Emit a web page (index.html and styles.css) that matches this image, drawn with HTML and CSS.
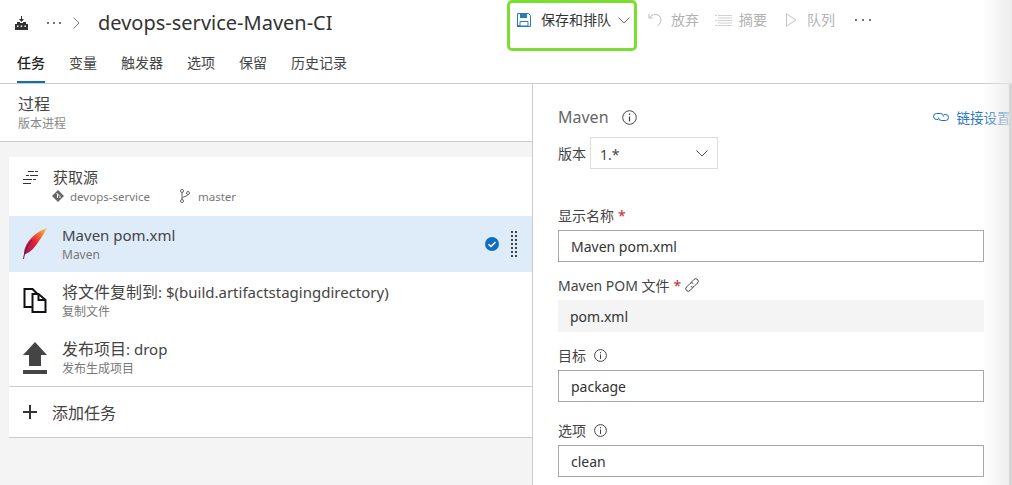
FILE: index.html
```html
<!DOCTYPE html>
<html lang="zh-CN">
<head>
    <meta charset="UTF-8">
    <title>devops-service-Maven-CI</title>
    <link rel="stylesheet" href="styles.css">
</head>
<body>
    <div class="top-row">
        <div class="crumbs">
            <svg class="logo" width="13" height="14" viewBox="0 0 13 14"><path d="M6 0h1v3h2L6.500 6 4 3h2zM2 6h3v1h3V6h3v2h2v6H0V8h2z" fill="#333"/><path d="M2 9.500h1.500V11H2zM5.700 9.500h1.500V11H5.700zM9.500 9.500H11V11H9.500z" fill="#fff"/></svg>
            <span class="dots"><i></i><i></i><i></i></span>
            <svg class="crumb-arrow" width="7" height="12" viewBox="0 0 7 12"><path d="M.5.500 6 6 .5 11.500" fill="none" stroke="#777"/></svg>
            <span class="title">devops-service-Maven-CI</span>
        </div>
        <div class="toolbar">
            <button class="save-btn">
                <svg width="14" height="14" viewBox="0 0 14 14"><path d="M.5.500h11l2 2v11H.5z" fill="#fff" stroke="#2b79c2"/><path d="M3 1h7v4H3z" fill="#2b79c2"/><path d="M3 8.500h8V13H3z" fill="none" stroke="#2b79c2"/><path d="M0 12h3v2H0z" fill="#2b79c2"/></svg>
                <span class="save-text">保存和排队</span>
                <svg class="save-arrow" width="12" height="7" viewBox="0 0 12 7"><path d="M.5.500 6 6 11.500.500" fill="none" stroke="#666"/></svg>
            </button>
            <span class="tool tool-undo">
                <svg width="14" height="14" viewBox="0 0 14 14"><path d="M1 1v4h4M1.300 4.800C3 2.500 5 1.500 7.500 1.500c3 0 5.500 2.200 5.500 5.200 0 2.400-1.500 4.300-3.500 6.300" fill="none" stroke="#bbb"/></svg>
                放弃
            </span>
            <span class="tool tool-summary">
                <svg width="17" height="11" viewBox="0 0 17 11"><path d="M3 .5h14M3 5.500h14M3 10.500h14M0 .5h2M0 5.500h2M0 10.500h2M3 3h14M3 8h14" stroke="#c4c4c4" fill="none" stroke-width=".8"/></svg>
                摘要
            </span>
            <span class="tool tool-queue">
                <svg width="11" height="14" viewBox="0 0 11 14"><path d="M.5.800 10 7 .5 13.200z" fill="none" stroke="#c4c4c4"/></svg>
                队列
            </span>
            <span class="dots tool-more"><i></i><i></i><i></i></span>
        </div>
    </div>

    <div class="tabs">
        <a class="tab active">任务</a>
        <a class="tab">变量</a>
        <a class="tab">触发器</a>
        <a class="tab">选项</a>
        <a class="tab">保留</a>
        <a class="tab">历史记录</a>
    </div>

    <div class="main">
        <div class="left">
            <div class="process">
                <div class="process-title">过程</div>
                <div class="process-sub">版本进程</div>
            </div>
            <div class="task-list">
                <div class="source-row">
                    <svg class="source-icon" width="15" height="13" viewBox="0 0 15 13"><path d="M5 .5h6M12 .5h3M3 4.500h3M7 4.500h8M0 8.500h9M10 8.500h3M0 12.500h8" stroke="#333" fill="none"/></svg>
                    <div>
                        <div class="source-name">获取源</div>
                        <div class="source-meta">
                            <svg width="12" height="12" viewBox="0 0 12 12"><path d="M6 0 12 6 6 12 0 6z" fill="#666"/><path d="M4.500 3 8 6.500V8M5.500 4v4" stroke="#fff" fill="none"/></svg>
                            <span class="repo">devops-service</span>
                            <svg class="branch" width="10" height="14" viewBox="0 0 10 14"><circle cx="2" cy="2" r="1.500" fill="none" stroke="#666"/><circle cx="2" cy="12" r="1.500" fill="none" stroke="#666"/><circle cx="8" cy="4" r="1.500" fill="none" stroke="#666"/><path d="M2 3.500v7M8 5.500c0 2-6 2-6 4" fill="none" stroke="#666"/></svg>
                            <span>master</span>
                        </div>
                    </div>
                </div>
                <div class="task selected">
                    <svg class="task-icon" width="26" height="32" viewBox="0 0 26 32">
                        <defs><linearGradient id="feather" x1="0" y1="1" x2="1" y2="0"><stop offset="0" stop-color="#8c1c5c"/><stop offset=".45" stop-color="#e2213a"/><stop offset=".8" stop-color="#f58a32"/><stop offset="1" stop-color="#f7d860"/></linearGradient></defs>
                        <path d="M25 0C17 3 7 9 3 20c-.8 2.400-1 4.500-.8 6.500 3.500-1 7-3.500 10-7C17 14 21 7 25 0z" fill="url(#feather)"/>
                        <path d="M1.500 31C2.500 24 5 18 10 12" fill="none" stroke="#6b1440" stroke-width="1"/>
                    </svg>
                    <div class="task-text">
                        <div class="task-name"><span class="latin">Maven pom.xml</span></div>
                        <div class="task-sub">Maven</div>
                    </div>
                    <svg class="check" width="14" height="14" viewBox="0 0 14 14"><circle cx="7" cy="7" r="7" fill="#106ebe"/><path d="M3.500 7.200 6 9.500 10.500 5" fill="none" stroke="#fff" stroke-width="1.500"/></svg>
                    <span class="grip"></span>
                </div>
                <div class="task">
                    <svg class="task-icon" width="23" height="25" viewBox="0 0 23 25"><path d="M1 1h8l4 4v14H1z" fill="#fff" stroke="#111" stroke-width="2"/><path d="M9 6h6l7 6v12H9z" fill="#fff" stroke="#111" stroke-width="2"/><path d="M15 6v6h7" fill="none" stroke="#111" stroke-width="2"/></svg>
                    <div class="task-text">
                        <div class="task-name">将文件复制到<span class="latin">: $(build.artifactstagingdirectory)</span></div>
                        <div class="task-sub">复制文件</div>
                    </div>
                </div>
                <div class="task task-last">
                    <svg class="task-icon" width="24" height="32" viewBox="0 0 24 32"><path d="M12 0 24 13H18V24H6V13H0z" fill="#444"/><path d="M0 28h24v4H0z" fill="#444"/></svg>
                    <div class="task-text">
                        <div class="task-name">发布项目<span class="latin">: drop</span></div>
                        <div class="task-sub">发布生成项目</div>
                    </div>
                </div>
                <div class="add-task">
                    <svg width="14" height="14" viewBox="0 0 14 14"><path d="M7 0v14M0 7h14" stroke="#333" stroke-width="2"/></svg>
                    <span>添加任务</span>
                </div>
            </div>
        </div>

        <div class="right">
            <div class="panel-head">
                <span class="panel-title">Maven</span>
                <svg class="info-big" width="15" height="15" viewBox="0 0 15 15"><circle cx="7.500" cy="7.500" r="6.800" fill="none" stroke="#444"/><path d="M7.500 6.500v5M7.500 3.500v1.500" stroke="#444" stroke-width="1.200"/></svg>
                <a class="link-settings">
                    <svg width="16" height="10" viewBox="0 0 16 10"><path d="M5 7.500H3.500a3 3 0 0 1 0-6h4a3 3 0 0 1 3 3" fill="none" stroke="#106ebe"/><path d="M11 2.500h1.500a3 3 0 0 1 0 6h-4a3 3 0 0 1-3-3" fill="none" stroke="#106ebe"/></svg>
                    <span>链接设置</span>
                </a>
            </div>
            <div class="version-row">
                <span>版本</span>
                <div class="version-select">
                    <span class="version-value">1.*</span>
                    <svg width="12" height="7" viewBox="0 0 12 7"><path d="M.5.500 6 6 11.500.500" fill="none" stroke="#555"/></svg>
                </div>
            </div>

            <div class="field field-name">
                <div class="label">显示名称 <span class="req">*</span></div>
                <div class="input">Maven pom.xml</div>
            </div>
            <div class="field">
                <div class="label">Maven POM 文件 <span class="req">*</span>
                    <svg width="14" height="14" viewBox="0 0 14 14"><path d="M6 4.500 9 1.500a2.300 2.300 0 0 1 3.500 3.500L9 8.500a2.300 2.300 0 0 1-3.200 0M8 9.500 5 12.500A2.300 2.300 0 0 1 1.500 9L5 5.500a2.300 2.300 0 0 1 3.200 0" fill="none" stroke="#444"/></svg>
                </div>
                <div class="input readonly">pom.xml</div>
            </div>
            <div class="field">
                <div class="label">目标
                    <svg class="info" width="13" height="13" viewBox="0 0 13 13"><circle cx="6.500" cy="6.500" r="5.900" fill="none" stroke="#444"/><path d="M6.500 5.500v4.500M6.500 3v1.300" stroke="#444"/></svg>
                </div>
                <div class="input">package</div>
            </div>
            <div class="field field-last">
                <div class="label">选项
                    <svg class="info" width="13" height="13" viewBox="0 0 13 13"><circle cx="6.500" cy="6.500" r="5.900" fill="none" stroke="#444"/><path d="M6.500 5.500v4.500M6.500 3v1.300" stroke="#444"/></svg>
                </div>
                <div class="input">clean</div>
            </div>
        </div>
    </div>

    <div class="edge-shadow"></div>
</body>
</html>
```

FILE: styles.css
```css
html, body { height: 100%; }
body { margin: 0; overflow: hidden; background: #fff; color: #333; font-family: "Noto Sans", "Noto Sans CJK SC", sans-serif; font-size: 14px; }
svg { display: block; flex: none; }

.top-row { display: flex; height: 51px; }
.crumbs { display: flex; align-items: center; width: 507px; height: 46px; padding-left: 15px; box-sizing: border-box; }
.dots { display: flex; gap: 4px; margin-left: 19px; }
.dots i { width: 2px; height: 2px; background: #444; border-radius: 1px; }
.crumb-arrow { margin-left: 12px; }
.title { margin-left: 18px; font-size: 20px; line-height: 28px; color: #333; white-space: nowrap; }

.toolbar { display: flex; align-items: flex-start; color: #b2b2b2; line-height: 20px; }
.save-btn { display: flex; width: 130px; height: 51px; box-sizing: border-box; padding: 10px 0 0 7px; align-items: flex-start; background: #fff; border: 3px solid #7ae02f; border-radius: 5px; font: inherit; color: #333; }
.save-text { margin-left: 10px; margin-top: -3px; }
.save-arrow { margin-left: 7px; margin-top: 4px; }
.tool { display: flex; align-items: center; gap: 9px; margin-top: 10px; white-space: nowrap; }
.tool-undo { margin-left: 11px; }
.tool-summary { margin-left: 16px; gap: 7px; }
.tool-queue { margin-left: 19px; gap: 10px; }
.tool-more { margin-left: 20px; margin-top: 19px; gap: 5px; }

.tabs { display: flex; gap: 24px; height: 32px; padding-left: 17px; border-bottom: 1px solid #ccc; }
.tab { height: 30px; line-height: 24px; color: #444; }
.tab.active { font-weight: 500; color: #222; border-bottom: 2px solid #106ebe; }

.main { display: flex; height: 401px; }
.left { width: 532px; flex: none; background: #f4f4f4; border-right: 1px solid #ccc; }
.process { height: 58px; padding-left: 18px; box-sizing: border-box; background: #fff; border-bottom: 1px solid #ccc; padding-top: 9px; }
.process-title { font-size: 16px; line-height: 22px; color: #444; }
.process-sub { font-size: 12px; line-height: 18px; color: #888; }

.task-list { margin: 15px 0 0 9px; background: #fff; }
.source-row { display: flex; height: 59px; box-sizing: border-box; padding: 9px 0 0 14px; }
.source-icon { margin: 5px 15px 0 0; }
.source-name { font-size: 15px; line-height: 22px; color: #444; }
.source-meta { display: flex; align-items: center; height: 20px; margin-top: -2px; font-size: 11.5px; color: #777; margin-left: -1px; }
.repo { margin-left: 6px; width: 110px; }
.branch { margin-right: 8px; }

.task { display: flex; align-items: center; height: 57px; padding-left: 13px; box-sizing: border-box; }
.task.selected { height: 56px; background: #deecf9; }
.task-last { height: 58px; border-bottom: 1px solid #ccc; }
.task-icon { width: 26px; margin-right: 14px; }
.task-name { font-size: 16px; line-height: 21px; color: #444; white-space: nowrap; }
.latin { font-size: 15px; }
.task-sub { margin-top: 1px; font-size: 12px; line-height: 16px; color: #777; }
.task-text { flex: 1; }
.check { margin-right: 11px; }
.grip { width: 8px; height: 28px; margin-right: 14px; background: radial-gradient(circle, #444 1.1px, transparent 1.5px) 0 0 / 4px 4px; }

.add-task { display: flex; align-items: center; height: 51px; box-sizing: border-box; padding-left: 14px; gap: 15px; font-size: 16px; color: #444; border-bottom: 1px solid #ccc; }

.right { flex: 1; padding-left: 25px; min-width: 0; }
.panel-head { display: flex; align-items: center; height: 24px; margin-top: 21px; white-space: nowrap; }
.panel-title { font-size: 16px; color: #666; }
.info-big { margin-left: 13px; }
.link-settings { display: flex; align-items: center; gap: 8px; margin-left: 296px; font-size: 13.500px; color: #2b79c2; }

.version-row { display: flex; align-items: center; height: 32px; margin-top: 8px; color: #444; }
.version-select { display: flex; align-items: center; justify-content: space-between; width: 128px; height: 32px; margin-left: 4px; padding: 0 9px; box-sizing: border-box; border: 1px solid #ddd; }
.version-value { padding-top: 2px; }

.field { width: 426px; margin-top: 11px; }
.field-name { margin-top: 34px; }
.field-last { margin-top: 16px; }
.label { display: flex; align-items: center; gap: 4px; height: 24px; margin-bottom: 3px; color: #444; white-space: nowrap; }
.req { color: #c4262e; }
.info { margin-left: 4px; }
.input { height: 32px; padding-top: 2px; line-height: 28px; padding-left: 12px; box-sizing: border-box; border: 1px solid #a6a6a6; color: #333; }
.input.readonly { border: 0; padding-top: 2px; line-height: 30px; background: #f4f4f4; }

/* scroll shadow over the right edge of the page */
.edge-shadow { position: absolute; top: 0; right: 0; bottom: 0; width: 50px; background: linear-gradient(to right, rgba(236,236,236,0) 40%, rgba(232,232,232,.8) 100%); }
.edge-shadow::after { content: ""; position: absolute; top: 84px; right: 0; bottom: 0; width: 3px; background: #d6d6d6; }
```
